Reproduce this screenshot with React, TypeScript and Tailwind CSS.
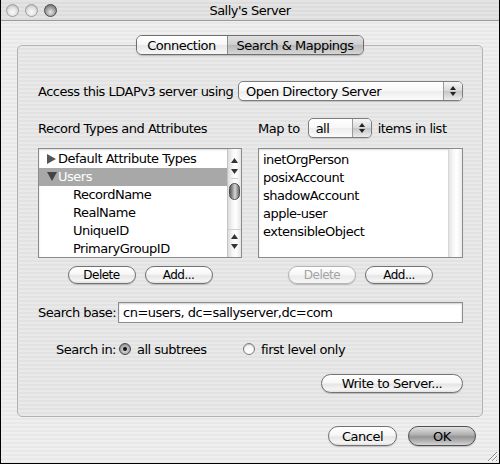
import React from "react";

function Light({ dark }: { dark?: boolean }) {
  return (
    <div
      className={
        dark
          ? "h-[13px] w-[13px] rounded-full border border-[#4a4a4a] bg-[radial-gradient(circle_at_50%_65%,#e8e8e8_0%,#a8a8a8_45%,#5a5a5a_100%)]"
          : "h-[13px] w-[13px] rounded-full border border-[#9c9c9c] bg-[radial-gradient(circle_at_50%_65%,#fafafa_0%,#e2e2e2_50%,#a9a9a9_100%)]"
      }
    />
  );
}

function AquaButton({
  label,
  className,
  disabled,
  primary,
}: {
  label: string;
  className: string;
  disabled?: boolean;
  primary?: boolean;
}) {
  const look = primary
    ? "border-[#4f4f4f] bg-[linear-gradient(180deg,#e2e2e2_0%,#b4b4b4_40%,#959595_55%,#bdbdbd_85%,#d6d6d6_100%)] text-black"
    : disabled
    ? "border-[#b4b4b4] bg-[linear-gradient(180deg,#ffffff_0%,#f6f6f6_50%,#ececec_55%,#f6f6f6_100%)] text-[#a4a4a4]"
    : "border-[#717171] bg-[linear-gradient(180deg,#ffffff_0%,#f7f7f7_45%,#e6e6e6_55%,#f4f4f4_85%,#e2e2e2_100%)] text-black";
  return (
    <div
      className={`flex items-center justify-center rounded-full border shadow-[0_1px_1px_rgba(0,0,0,0.18)] leading-none ${look} ${className}`}
    >
      {label}
    </div>
  );
}

function PopupArrows() {
  return (
    <div className="flex w-[19px] flex-col items-center justify-center gap-[2px] rounded-r-[4px] border-l border-[#9a9a9a] bg-[linear-gradient(180deg,#f6f6f6_0%,#dadada_48%,#c6c6c6_52%,#ececec_100%)]">
      <svg width="6" height="4" viewBox="0 0 6 4">
        <path d="M3 0L6 4H0z" fill="#222" />
      </svg>
      <svg width="6" height="4" viewBox="0 0 6 4">
        <path d="M0 0h6L3 4z" fill="#222" />
      </svg>
    </div>
  );
}

function Popup({ label, className }: { label: string; className: string }) {
  return (
    <div
      className={`flex h-[20px] items-stretch rounded-[5px] border border-[#7d7d7d] bg-[linear-gradient(180deg,#ffffff_0%,#f7f7f7_50%,#ededed_52%,#fbfbfb_100%)] shadow-[0_1px_1px_rgba(0,0,0,0.15)] ${className}`}
    >
      <div className="flex flex-1 items-center pl-[7px] leading-none">{label}</div>
      <PopupArrows />
    </div>
  );
}

function ArrowUp() {
  return (
    <svg width="7" height="5" viewBox="0 0 7 5">
      <path d="M3.5 0L7 5H0z" fill="#333" />
    </svg>
  );
}
function ArrowDown() {
  return (
    <svg width="7" height="5" viewBox="0 0 7 5">
      <path d="M0 0h7L3.5 5z" fill="#333" />
    </svg>
  );
}

function Radio({ on }: { on?: boolean }) {
  return on ? (
    <div className="flex h-[12px] w-[12px] items-center justify-center rounded-full border border-[#4a4a4a] bg-[radial-gradient(circle_at_50%_60%,#e6e6e6_0%,#ababab_55%,#6c6c6c_100%)]">
      <div className="h-[4px] w-[4px] rounded-full bg-[#111]" />
    </div>
  ) : (
    <div className="h-[12px] w-[12px] rounded-full border border-[#7a7a7a] bg-[linear-gradient(180deg,#f2f2f2,#ffffff)] shadow-[inset_0_1px_1px_rgba(0,0,0,0.2)]" />
  );
}

export default function App() {
  return (
    <div className="relative flex h-[464px] w-[500px] flex-col overflow-hidden border-x border-b border-black bg-[image:repeating-linear-gradient(180deg,#efefef_0px,#efefef_2px,#e8e8e8_2px,#e8e8e8_4px)] font-['DejaVu_Sans',sans-serif] text-[13px] tracking-[-0.5px] text-black">
      {/* title bar */}
      <div className="relative flex h-[21px] shrink-0 items-center border-b border-[#9a9a9a] bg-[image:repeating-linear-gradient(180deg,#e4e4e4_0px,#e4e4e4_2px,#dcdcdc_2px,#dcdcdc_4px)]">
        <div className="flex items-center gap-[6px] pl-[5px]">
          <Light />
          <Light />
          <Light dark />
        </div>
        <div className="absolute inset-0 flex items-center justify-center leading-none">Sally's Server</div>
      </div>

      {/* body */}
      <div className="flex flex-col px-[16px] pt-[14px]">
        {/* tabs */}
        <div className="relative z-10 flex h-[20px] justify-center pr-[1px]">
          <div className="flex items-stretch rounded-[6px] border border-[#6e6e6e] shadow-[0_1px_1px_rgba(0,0,0,0.2)]">
            <div className="flex w-[90px] items-center justify-center rounded-l-[5px] bg-[linear-gradient(180deg,#ffffff_0%,#f6f6f6_50%,#e8e8e8_52%,#f6f6f6_100%)] leading-none">
              Connection
            </div>
            <div className="flex w-[136px] items-center justify-center rounded-r-[5px] border-l border-[#8a8a8a] bg-[linear-gradient(180deg,#e2e2e2_0%,#cdcdcd_48%,#b9b9b9_52%,#d6d6d6_100%)] leading-none">
              Search &amp; Mappings
            </div>
          </div>
        </div>

        {/* tab box */}
        <div className="-mt-[10px] flex h-[372px] flex-col rounded-[5px] border border-[#b2b2b2] bg-[image:repeating-linear-gradient(180deg,#e9e9e9_0px,#e9e9e9_2px,#e2e2e2_2px,#e2e2e2_4px)] pl-[20px] pr-[20px] pt-[35px]">
          {/* row 1 */}
          <div className="flex h-[20px] w-[425px] items-center">
            <span className="leading-none">Access this LDAPv3 server using</span>
            <Popup label="Open Directory Server" className="ml-auto w-[225px]" />
          </div>

          {/* row 2 */}
          <div className="mt-[17px] flex h-[20px] w-[425px] items-center">
            <div className="w-[220px] leading-none">Record Types and Attributes</div>
            <div className="flex items-center">
              <span className="leading-none">Map to</span>
              <Popup label="all" className="ml-[8px] w-[64px]" />
              <span className="ml-[6px] leading-none">items in list</span>
            </div>
          </div>

          {/* lists */}
          <div className="mt-[10px] flex h-[110px] w-[425px] gap-[16px]">
            {/* left list */}
            <div className="flex h-[110px] w-[204px] border border-[#8a8a8a] bg-white shadow-[inset_0_1px_2px_rgba(0,0,0,0.15)]">
              <div className="flex flex-1 flex-col pt-[1px]">
                <div className="flex h-[18px] items-center pl-[8px]">
                  <svg width="9" height="10" viewBox="0 0 9 10" className="mr-[2px]">
                    <path d="M0 0L9 5L0 10z" fill="#555" />
                  </svg>
                  <span className="leading-none">Default Attribute Types</span>
                </div>
                <div className="flex h-[18px] items-center bg-[#a8a8a8] pl-[8px] text-white">
                  <svg width="10" height="9" viewBox="0 0 10 9" className="mr-[1px]">
                    <path d="M0 0H10L5 9z" fill="#444" />
                  </svg>
                  <span className="leading-none">Users</span>
                </div>
                <div className="flex h-[18px] items-center pl-[34px] leading-none">RecordName</div>
                <div className="flex h-[18px] items-center pl-[34px] leading-none">RealName</div>
                <div className="flex h-[18px] items-center pl-[34px] leading-none">UniqueID</div>
                <div className="flex h-[18px] items-center pl-[34px] leading-none">PrimaryGroupID</div>
              </div>
              {/* scrollbar */}
              <div className="flex w-[14px] flex-col items-center border-l border-[#c4c4c4] bg-[linear-gradient(90deg,#dcdcdc_0%,#f6f6f6_35%,#ffffff_60%,#e6e6e6_100%)]">
                <div className="flex h-[16px] items-end justify-center pb-[2px]">
                  <ArrowUp />
                </div>
                <div className="flex h-[14px] items-center justify-center border-b border-[#cfcfcf]">
                  <ArrowDown />
                </div>
                <div className="mt-[4px] h-[17px] w-[11px] rounded-full border border-[#4c4c4c] bg-[linear-gradient(90deg,#5c5c5c_0%,#bcbcbc_45%,#d8d8d8_55%,#6e6e6e_100%)]" />
                <div className="flex-1" />
                <div className="flex h-[14px] w-full items-center justify-center border-t border-[#cfcfcf]">
                  <ArrowUp />
                </div>
                <div className="flex h-[14px] items-start justify-center pt-[1px]">
                  <ArrowDown />
                </div>
              </div>
            </div>

            {/* right list */}
            <div className="flex h-[110px] w-[205px] border border-[#8a8a8a] bg-white shadow-[inset_0_1px_2px_rgba(0,0,0,0.15)]">
              <div className="flex flex-1 flex-col pl-[4px] pt-[1px]">
                <div className="flex h-[18px] items-center leading-none">inetOrgPerson</div>
                <div className="flex h-[18px] items-center leading-none">posixAccount</div>
                <div className="flex h-[18px] items-center leading-none">shadowAccount</div>
                <div className="flex h-[18px] items-center leading-none">apple-user</div>
                <div className="flex h-[18px] items-center leading-none">extensibleObject</div>
              </div>
              <div className="w-[14px] border-l border-[#d6d6d6] bg-[linear-gradient(90deg,#e4e4e4_0%,#f8f8f8_35%,#ffffff_60%,#ececec_100%)]" />
            </div>
          </div>

          {/* buttons under lists */}
          <div className="mt-[8px] flex h-[18px] w-[425px] gap-[16px]">
            <div className="flex w-[204px] justify-center gap-[9px]">
              <AquaButton label="Delete" className="h-[18px] w-[68px] text-[12px]" />
              <AquaButton label="Add..." className="h-[18px] w-[68px] text-[12px]" />
            </div>
            <div className="flex w-[205px] justify-center gap-[9px]">
              <AquaButton label="Delete" disabled className="h-[18px] w-[68px] text-[12px]" />
              <AquaButton label="Add..." className="h-[18px] w-[68px] text-[12px]" />
            </div>
          </div>

          {/* search base */}
          <div className="mt-[18px] flex h-[21px] w-[425px] items-center">
            <span className="leading-none">Search base:</span>
            <div className="ml-auto flex h-[21px] w-[345px] items-center border border-[#8c8c8c] bg-white pl-[4px] leading-none shadow-[inset_0_1px_2px_rgba(0,0,0,0.2)]">
              cn=users, dc=sallyserver,dc=com
            </div>
          </div>

          {/* search in */}
          <div className="mt-[17px] flex h-[18px] w-[425px] items-center">
            <div className="flex w-[78px] justify-end leading-none">Search in:</div>
            <div className="ml-[3px] flex w-[124px] items-center">
              <Radio on />
              <span className="ml-[6px] leading-none">all subtrees</span>
            </div>
            <div className="flex items-center">
              <Radio />
              <span className="ml-[6px] leading-none">first level only</span>
            </div>
          </div>

          {/* write to server */}
          <div className="mt-[16px] flex w-[425px] justify-end">
            <AquaButton label="Write to Server..." className="h-[19px] w-[142px] text-[13px]" />
          </div>
        </div>

        {/* footer */}
        <div className="mt-[9px] flex justify-end gap-[11px] pr-[7px]">
          <AquaButton label="Cancel" className="h-[20px] w-[69px] text-[13px]" />
          <AquaButton label="OK" primary className="h-[20px] w-[68px] text-[13px]" />
        </div>
      </div>

      {/* resize grip */}
      <svg width="12" height="12" viewBox="0 0 12 12" className="absolute bottom-[1px] right-[1px]">
        <path d="M11 2L2 11M11 6L6 11M11 10L10 11" stroke="#8a8a8a" strokeWidth="1" />
        <path d="M11 3L3 11M11 7L7 11" stroke="#ffffff" strokeWidth="1" />
      </svg>
    </div>
  );
}
